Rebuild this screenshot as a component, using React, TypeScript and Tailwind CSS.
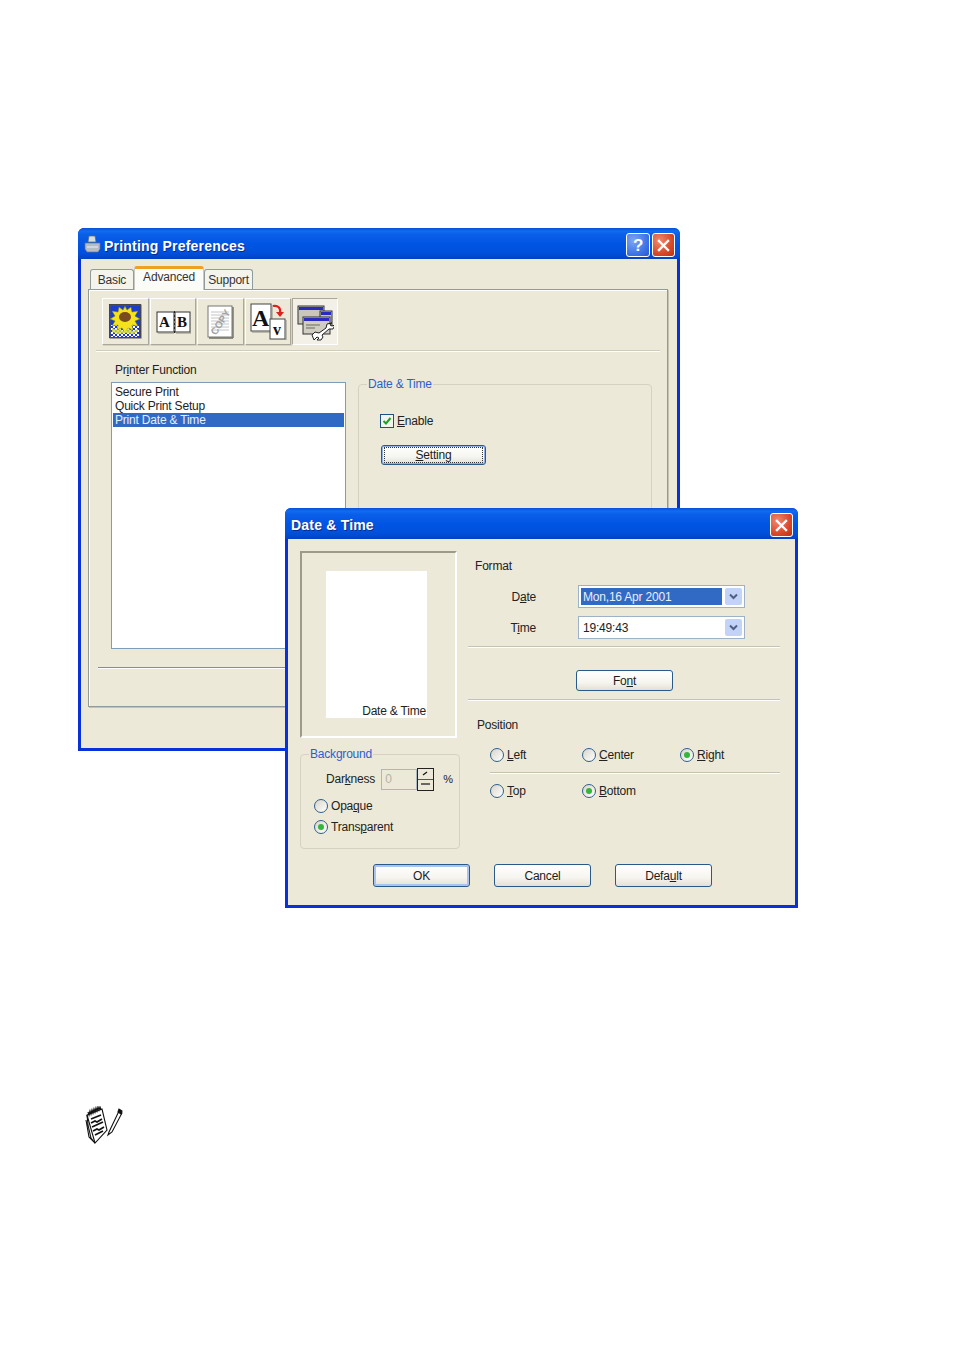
import type { ReactNode } from "react";

const titleBar =
  "bg-[linear-gradient(180deg,#0a4fd6_0%,#0f6cf0_10%,#0a5ee8_22%,#0054e3_55%,#0050dc_80%,#0342c4_100%)]";
const xpButton =
  "flex items-center justify-center rounded-[3px] border border-[#2a5a8a] bg-[linear-gradient(180deg,#ffffff_0%,#f6f5ef_60%,#e3e0d4_100%)] text-[12px] leading-[14px] text-[#1c1c1c]";

function WindowFrame({ className, children }: { className: string; children: ReactNode }) {
  return (
    <div className={`absolute flex flex-col overflow-hidden rounded-t-[6px] ${className}`}>
      {children}
    </div>
  );
}

function CloseButton() {
  return (
    <div className="flex h-[24px] w-[23px] items-center justify-center rounded-[3px] border border-white bg-[radial-gradient(circle_at_30%_30%,#ee8a6e,#d9492a_60%,#b8320f)]">
      <svg width="13" height="13" viewBox="0 0 13 13">
        <path d="M2 2l9 9M11 2l-9 9" stroke="#fff" strokeWidth="2.4" strokeLinecap="square" />
      </svg>
    </div>
  );
}

function Radio({ checked, label }: { checked?: boolean; label: ReactNode }) {
  return (
    <div className="flex items-center gap-[3px] text-[12px] leading-[14px] text-[#222]">
      <span className="flex h-[14px] w-[14px] items-center justify-center rounded-full border border-[#2f5f8c] bg-[linear-gradient(135deg,#d8d5c8,#ffffff)]">
        {checked && <span className="h-[6px] w-[6px] rounded-full bg-[#35b53c]" />}
      </span>
      <span>{label}</span>
    </div>
  );
}

function Combo({ children, selected }: { children: string; selected?: boolean }) {
  return (
    <div className="flex h-[23px] w-[167px] items-center border border-[#9db2c6] bg-white p-[2px]">
      <span
        className={
          selected
            ? "flex h-[17px] w-[141px] items-center bg-[#316ac5] pl-[2px] text-[12px] text-[#e8eefa]"
            : "flex h-[17px] w-[141px] items-center pl-[2px] text-[12px] text-[#222]"
        }
      >
        {children}
      </span>
      <span className="ml-auto flex h-[17px] w-[17px] items-center justify-center rounded-[2px] bg-[#c3d3f8]">
        <svg width="9" height="7" viewBox="0 0 9 7">
          <path d="M1 1.5l3.5 3.5L8 1.5" fill="none" stroke="#4d6185" strokeWidth="2" />
        </svg>
      </span>
    </div>
  );
}

function ToolButton({ width, active, children }: { width: string; active?: boolean; children: ReactNode }) {
  return (
    <div
      className={
        active
          ? `flex h-[47px] items-center justify-center border border-t-[#aca899] border-l-[#aca899] border-r-white border-b-white bg-[#f3f1e7] ${width}`
          : `flex h-[47px] items-center justify-center border border-t-white border-l-white border-r-[#aca899] border-b-[#aca899] bg-[#ece9d8] shadow-[1px_1px_0_#d5d2c2] ${width}`
      }
    >
      {children}
    </div>
  );
}

function SunflowerIcon() {
  return (
    <svg width="33" height="35" viewBox="0 0 33 35">
      <defs>
        <pattern id="chk" width="4" height="4" patternUnits="userSpaceOnUse">
          <rect width="4" height="4" fill="#fff" />
          <rect width="2" height="2" fill="#1b35d8" />
          <rect x="2" y="2" width="2" height="2" fill="#1b35d8" />
        </pattern>
      </defs>
      <rect x="0.5" y="0.5" width="31" height="33" fill="#1a3fd0" stroke="#3a3a3a" />
      <rect x="1" y="1" width="31" height="33" fill="none" stroke="#555" strokeWidth="1" />
      <rect x="2" y="21" width="28" height="12" fill="url(#chk)" />
      <path
        d="M16 2l2 4 4-3 1 5 6-1-3 5 5 3-5 2 3 5-6-1 1 5-5-2-3 5-3-5-5 2 1-5-6 1 3-5-5-2 5-3-3-5 6 1 1-5 4 3z"
        fill="#f4e21c"
        stroke="#6f7a10"
        strokeWidth="0.5"
      />
      <ellipse cx="16" cy="13" rx="6" ry="5" fill="#7a4a20" />
      <path d="M3 24l5 2 3-1 3 2 6-2 4 2 5-2v3l-5 2-8-1-7 1-6-2z" fill="#d8dc40" opacity="0.85" />
    </svg>
  );
}

function CardsIcon() {
  return (
    <svg width="35" height="24" viewBox="0 0 35 24">
      <rect x="1" y="2" width="17" height="20" fill="#fff" stroke="#333" />
      <rect x="19" y="2" width="15" height="20" fill="#fff" stroke="#333" />
      <path d="M2 23h16M20 23h15M18 3v20M35 3v20" stroke="#8c8c80" />
      <text x="3" y="17" fontFamily="Liberation Serif, serif" fontWeight="700" fontSize="15" fill="#111">A</text>
      <text x="21" y="17" fontFamily="Liberation Serif, serif" fontWeight="700" fontSize="15" fill="#111">B</text>
      <path d="M18.5 1v22" stroke="#222" strokeDasharray="2 2" />
    </svg>
  );
}

function CopyIcon() {
  return (
    <svg width="27" height="34" viewBox="0 0 27 34">
      <rect x="1" y="1" width="24" height="31" fill="#fff" stroke="#777" />
      <path d="M2 33h24M26 2v31" stroke="#6f6f66" strokeWidth="1.4" />
      <path d="M4 7h18M4 10h18M4 13h18M4 16h18M4 19h18M4 22h18M4 25h18" stroke="#c4c4c4" />
      <text
        x="13"
        y="21"
        textAnchor="middle"
        transform="rotate(-58 13 17)"
        fontFamily="Liberation Sans, sans-serif"
        fontWeight="700"
        fontSize="10"
        fill="#a3a3a3"
      >
        COPY
      </text>
    </svg>
  );
}

function FontSizeIcon() {
  return (
    <svg width="37" height="37" viewBox="0 0 37 37">
      <rect x="1" y="1" width="20" height="27" fill="#fff" stroke="#444" />
      <path d="M2 29h20M22 2v27" stroke="#8c8c80" />
      <text x="2" y="23" fontFamily="Liberation Serif, serif" fontWeight="700" fontSize="24" fill="#111">A</text>
      <rect x="20" y="16" width="15" height="20" fill="#fff" stroke="#444" />
      <path d="M21 37h15M36 17v20" stroke="#8c8c80" />
      <text x="23" y="32" fontFamily="Liberation Serif, serif" fontWeight="700" fontSize="16" fill="#111">v</text>
      <path d="M23 3c5-1 8 2 7 7" fill="none" stroke="#e0201c" strokeWidth="2.2" />
      <path d="M26 9h8l-4 5z" fill="#e0201c" />
    </svg>
  );
}

function SettingsIcon() {
  return (
    <svg width="38" height="38" viewBox="0 0 38 38">
      <rect x="2" y="3" width="26" height="18" fill="#c8c6ba" stroke="#333" />
      <rect x="3" y="4" width="24" height="3" fill="#2a2ac0" />
      <rect x="24" y="8" width="12" height="16" fill="#c8c6ba" stroke="#333" />
      <rect x="25" y="9" width="10" height="3" fill="#2a2ac0" />
      <rect x="7" y="14" width="27" height="17" fill="#d0cec2" stroke="#333" />
      <rect x="8" y="15" width="25" height="3" fill="#2a2ac0" />
      <path d="M10 22h14M10 25h9" stroke="#8a8a80" strokeWidth="1.5" />
      <path
        d="M36 20l-5 1-1 4-7 5-4-1-3 3 2 5 3-3 2 1-2 2 4 0 2-3-1-2 7-6 4 0 2-4-3 1-2-1 1-2z"
        fill="#fff"
        stroke="#222"
      />
    </svg>
  );
}

function NoteIcon() {
  return (
    <svg width="38" height="38" viewBox="0 0 38 38" fill="none" stroke="#111" strokeWidth="1.1">
      <path d="M2 9L17 3l5 21-12 13z" fill="#fff" />
      <path d="M2 9l1 10 3 13 4 5M1 14l3 17 6 6" />
      <path d="M3 6l1 3 1-4 1 3 1-4 1 3 1-4 1 3 1-4 1 3 1-4 1 3 1-3 1 3" strokeWidth="1.2" />
      <path d="M6 13l10-4M6 17l4-2 2 1 5-3M7 21l11-5M8 25l4-2 2 1 5-3M10 29l8-4" strokeWidth="1.7" />
      <path d="M24 26l10-21 3 2-10 19-4 3z" fill="#fff" />
      <path d="M33 6l1-3 3 2-1 3z" fill="#111" />
    </svg>
  );
}

function PrintingPreferences() {
  return (
    <WindowFrame className="left-[78px] top-[228px] h-[523px] w-[602px] bg-[#0831d9]">
      <div className={`flex h-[31px] shrink-0 items-center pl-[6px] pr-[4px] ${titleBar}`}>
        <svg width="17" height="18" viewBox="0 0 17 18">
          <path d="M5 1h6l1 6H4z" fill="#d8dce0" stroke="#5a6a7a" strokeWidth="0.7" />
          <path d="M1 8h15v6l-2 3H3l-2-3z" fill="#b4bcc4" stroke="#6a7480" strokeWidth="0.7" />
          <path d="M3 12h11" stroke="#eef" />
        </svg>
        <span className="ml-[3px] pt-[5px] font-['Liberation_Sans',sans-serif] text-[14px] font-bold tracking-[0.2px] text-white [text-shadow:1px_1px_0_#0a2a90]">
          Printing Preferences
        </span>
        <div className="ml-auto mr-[1px] flex gap-[2px] pt-[3px]">
          <div className="flex h-[24px] w-[24px] items-center justify-center rounded-[3px] border border-white bg-[radial-gradient(circle_at_30%_30%,#7ea6f4,#3a72e6_65%,#2a58c8)] text-[17px] font-bold leading-none text-white">
            ?
          </div>
          <CloseButton />
        </div>
      </div>
      <div className="mx-[3px] mb-[3px] flex flex-1 flex-col bg-[#ece9d8] pl-[7px] pt-[7px]">
        <div className="relative z-10 ml-[2px] flex h-[23px] items-end text-[12px] leading-[14px] text-[#333]">
          <div className="flex h-[20px] w-[44px] items-center justify-center rounded-t-[3px] border border-b-0 border-[#919b9c] bg-[#f4f3ec]">
            Basic
          </div>
          <div className="mb-[-1px] flex h-[24px] w-[70px] items-start justify-center rounded-t-[3px] border-t-[3px] border-x border-t-[#f0a020] border-x-[#c8c8c0] bg-[#fbfbf7] pt-[1px]">
            Advanced
          </div>
          <div className="flex h-[20px] w-[49px] items-center justify-center rounded-t-[3px] border border-b-0 border-[#919b9c] bg-[#f4f3ec]">
            Support
          </div>
        </div>
        <div className="h-[418px] w-[580px] border border-[#919b9c] bg-[#ece9d8] shadow-[inset_1px_1px_0_#fff,1px_1px_0_#c5c2b2]">
          <div className="ml-[13px] mt-[8px] flex gap-[1px]">
            <ToolButton width="w-[47px]"><SunflowerIcon /></ToolButton>
            <ToolButton width="w-[46px]"><CardsIcon /></ToolButton>
            <ToolButton width="w-[47px]"><CopyIcon /></ToolButton>
            <ToolButton width="w-[46px]"><FontSizeIcon /></ToolButton>
            <ToolButton width="w-[46px]" active><SettingsIcon /></ToolButton>
          </div>
          <div className="ml-[7px] mt-[5px] h-[2px] w-[564px] border-t border-b border-t-[#cfccbc] border-b-white" />
          <div className="mt-[11px] flex gap-[12px] pl-[22px]">
            <div className="w-[235px]">
              <div className="ml-[4px] h-[14px] text-[12px] leading-[14px] text-[#222]">
                Pr<u>i</u>nter Function
              </div>
              <div className="mt-[5px] flex h-[267px] flex-col border border-[#7f9db9] bg-white px-[1px] pt-[2px] text-[12px] leading-[14px] text-[#222]">
                <span className="pl-[2px]">Secure Print</span>
                <span className="pl-[2px]">Quick Print Setup</span>
                <span className="bg-[#316ac5] pl-[2px] text-[#e8eefa]">Print Date &amp; Time</span>
              </div>
            </div>
            <fieldset className="mt-[14px] h-[265px] w-[294px] rounded-[4px] border border-[#d5d2c2]">
              <legend className="ml-[8px] px-[1px] text-[12px] leading-[14px] text-[#2a5fd0]">Date &amp; Time</legend>
              <div className="pl-[21px]">
                <div className="mt-[23px] flex items-center gap-[3px] text-[12px] leading-[14px] text-[#222]">
                  <span className="flex h-[14px] w-[14px] items-center justify-center border border-[#1c5180] bg-[#f4f4ee]">
                    <svg width="10" height="10" viewBox="0 0 10 10">
                      <path d="M1.5 5l2.5 2.5L8.5 2" fill="none" stroke="#21a121" strokeWidth="2" />
                    </svg>
                  </span>
                  <span><u>E</u>nable</span>
                </div>
                <div className={`mt-[17px] h-[20px] w-[105px] ${xpButton} ml-[1px] border-[#1f5aa0] shadow-[inset_0_0_0_1px_#8fb0e8]`}>
                  <span className="flex h-[16px] w-[99px] items-center justify-center border border-dotted border-[#333]">
                    <span><u>S</u>etting</span>
                  </span>
                </div>
              </div>
            </fieldset>
          </div>
          <div className="ml-[9px] mt-[18px] h-[2px] w-[560px] border-t border-b border-t-[#8f8c7c] border-b-white" />
        </div>
      </div>
    </WindowFrame>
  );
}

function DateTimeDialog() {
  return (
    <WindowFrame className="left-[285px] top-[508px] h-[400px] w-[513px] bg-[#0831d9]">
      <div className={`flex h-[31px] shrink-0 items-center pl-[6px] pr-[5px] ${titleBar}`}>
        <span className="pt-[4px] font-['Liberation_Sans',sans-serif] text-[14px] font-bold tracking-[0.2px] text-white [text-shadow:1px_1px_0_#0a2a90]">
          Date &amp; Time
        </span>
        <div className="ml-auto pt-[3px]">
          <CloseButton />
        </div>
      </div>
      <div className="mx-[3px] mb-[3px] flex flex-1 flex-col bg-[#ece9d8] pl-[12px] pt-[12px]">
        <div className="flex">
          <div className="w-[160px]">
            <div className="h-[187px] w-[157px] border-2 border-t-[#9d9a8a] border-l-[#9d9a8a] border-r-white border-b-white pl-[24px] pt-[18px]">
              <div className="flex h-[147px] w-[101px] items-end justify-end bg-white pr-[1px] text-[12px] leading-[14px] text-[#222]">
                Date &amp; Time
              </div>
            </div>
            <fieldset className="mt-[9px] h-[102px] w-[160px] rounded-[4px] border border-[#d5d2c2]">
              <legend className="ml-[8px] px-[1px] text-[12px] leading-[14px] text-[#2a5fd0]">Background</legend>
              <div className="pl-[13px]">
                <div className="mt-[7px] flex h-[22px] items-center text-[12px] leading-[14px] text-[#222]">
                  <span className="ml-[12px]">Dar<u>k</u>ness</span>
                  <span className="ml-[6px] flex h-[21px] w-[36px] items-center border border-[#a9b7c2] pl-[3px] text-[#b5b2a4]">0</span>
                  <span className="flex h-[23px] w-[17px] flex-col border border-[#222] bg-[#ece9d8]">
                    <span className="flex h-[11px] items-center justify-center border-b border-[#555]">
                      <svg width="7" height="5" viewBox="0 0 7 5"><path d="M1 4l4-3" stroke="#111" strokeWidth="1.2" /></svg>
                    </span>
                    <span className="flex flex-1 items-center justify-center">
                      <svg width="9" height="3" viewBox="0 0 9 3"><path d="M0 1h9" stroke="#111" strokeWidth="1.2" /></svg>
                    </span>
                  </span>
                  <span className="ml-[9px] text-[11px]">%</span>
                </div>
                <div className="mt-[9px] flex flex-col gap-[7px]">
                  <Radio label={<>Opa<u>q</u>ue</>} />
                  <Radio checked label={<>Trans<u>p</u>arent</>} />
                </div>
              </div>
            </fieldset>
          </div>
          <div className="ml-[8px] flex w-[312px] flex-col text-[12px] leading-[14px] text-[#222]">
            <div className="ml-[7px] mt-[8px]">Format</div>
            <div className="mt-[12px] grid grid-cols-[68px_167px] items-center justify-start gap-x-[42px] gap-y-[8px]">
              <span className="text-right">D<u>a</u>te</span>
              <Combo selected>Mon,16 Apr 2001</Combo>
              <span className="text-right">T<u>i</u>me</span>
              <Combo>19:49:43</Combo>
            </div>
            <div className="mt-[7px] h-[2px] w-[312px] border-t border-b border-t-[#c5c2b2] border-b-white" />
            <div className={`ml-[108px] mt-[22px] h-[21px] w-[97px] ${xpButton}`}>
              <span>Fo<u>n</u>t</span>
            </div>
            <div className="mt-[8px] h-[2px] w-[312px] border-t border-b border-t-[#c5c2b2] border-b-white" />
            <div className="ml-[9px] mt-[17px]">Position</div>
            <div className="ml-[22px] mt-[16px] grid grid-cols-[92px_98px_auto] items-center">
              <Radio label={<><u>L</u>eft</>} />
              <Radio label={<><u>C</u>enter</>} />
              <Radio checked label={<><u>R</u>ight</>} />
            </div>
            <div className="ml-[22px] mt-[10px] h-[2px] w-[290px] border-t border-b border-t-[#c5c2b2] border-b-white" />
            <div className="ml-[22px] mt-[10px] grid grid-cols-[92px_98px_auto] items-center">
              <Radio label={<><u>T</u>op</>} />
              <Radio checked label={<><u>B</u>ottom</>} />
            </div>
          </div>
        </div>
        <div className="ml-[73px] mt-[15px] flex gap-[24px]">
          <div className={`h-[23px] w-[97px] ${xpButton} border-[#1f5aa0] shadow-[inset_0_0_0_2px_#a9c4ee]`}>OK</div>
          <div className={`h-[23px] w-[97px] ${xpButton}`}>Cancel</div>
          <div className={`h-[23px] w-[97px] ${xpButton}`}>
            <span>Defa<u>u</u>lt</span>
          </div>
        </div>
      </div>
    </WindowFrame>
  );
}

export default function App() {
  return (
    <div className="relative h-[1351px] w-[954px] overflow-hidden bg-white font-['Liberation_Sans',sans-serif] tracking-[-0.2px]">
      <PrintingPreferences />
      <DateTimeDialog />
      <div className="absolute left-[85px] top-[1106px]">
        <NoteIcon />
      </div>
    </div>
  );
}
